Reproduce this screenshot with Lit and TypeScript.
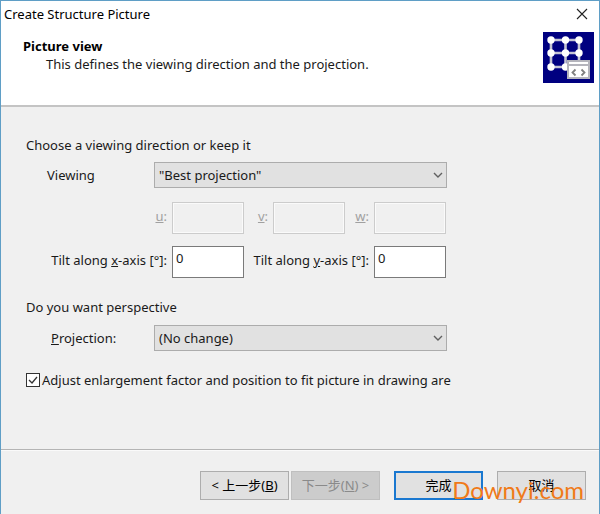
import { LitElement, html, css, svg } from "lit";
import { customElement, property } from "lit/decorators.js";

const chevron = html`<svg class="chevron" width="10" height="6" viewBox="0 0 10 6" aria-hidden="true">
  <path d="M1 1l4 4 4-4" fill="none" stroke="#606060" stroke-width="1.4" />
</svg>`;

@customElement("lattice-logo")
export class LatticeLogo extends LitElement {
  static styles = css`
    :host { display: block; width: 51px; height: 51px; }
    svg { display: block; }
  `;

  render() {
    const stops = [8, 22.5, 36];
    const rows = [8, 21, 35];
    return html`<svg width="51" height="51" viewBox="0 0 51 51" aria-hidden="true">
      <rect width="51" height="51" fill="#000080" />
      <path d="M8 8H36M8 21H36M8 35H36M8 8V35M22.5 8V35M36 8V35" stroke="#c4c4d4" stroke-width="2.6" fill="none" />
      ${rows.map((y) => stops.map((x) => svg`<circle cx=${x} cy=${y} r="3.7" fill="#fff" />`))}
      <rect x="24" y="28" width="23" height="19" fill="#b4b4bc" />
      <rect x="26" y="30" width="19" height="2" fill="#fff" />
      <rect x="26" y="34" width="19" height="11" fill="#fff" />
      <path d="M32.500 37.500l-3 3 3 3M38.500 37.500l3 3-3 3" fill="none" stroke="#808080" stroke-width="1.800" />
    </svg>`;
  }
}

@customElement("app-root")
export class AppRoot extends LitElement {
  @property() heading = "Create Structure Picture";

  static styles = css`
    :host {
      display: block;
      font: 13px/18px "Noto Sans", "Noto Sans CJK SC", sans-serif;
      color: #1a1a1a;
    }
    * { box-sizing: border-box; }
    .window {
      position: relative;
      display: flex;
      flex-direction: column;
      min-height: 100vh;
      border: 1px solid #5f9ec6;
      border-bottom: 0;
      background: #f0f0f0;
    }
    .titlebar {
      display: flex;
      justify-content: space-between;
      align-items: center;
      height: 26px;
      padding: 0 11px 0 3px;
      background: #fff;
      color: #000;
    }
    .close { border: 0; padding: 0; background: none; display: flex; }
    .header {
      display: flex;
      justify-content: space-between;
      height: 80px;
      padding: 5px 5px 0 22px;
      background: #fff;
      border-bottom: 2px solid #c4c4c4;
    }
    h1, h2, p { margin: 0; font-size: inherit; }
    h1 { margin-top: 5px; color: #000; }
    h2 { font-weight: 400; }
    .header p { padding-left: 23px; }
    .body {
      flex: 1;
      padding: 29px 25px 0;
      border-bottom: 1px solid #b4b4b4;
    }
    .field {
      display: grid;
      grid-template-columns: 107px 293px;
      align-items: center;
      margin: 8px 0 14px;
      padding-left: 21px;
    }
    .field.projection { margin: 9px 0 0; padding-left: 25px; grid-template-columns: 103px 293px; }
    .picker { position: relative; }
    select {
      display: block;
      appearance: none;
      width: 100%;
      height: 26px;
      padding: 0 4px;
      border: 1px solid #acacac;
      border-radius: 0;
      background: #e1e1e1;
      color: inherit;
      font: inherit;
    }
    .chevron { position: absolute; right: 4px; top: 10px; pointer-events: none; }
    .axes {
      display: grid;
      grid-template-columns: 116px 72px 19px 72px 19px 72px;
      gap: 12px 5px;
      align-items: center;
      padding-left: 25px;
    }
    .axes label { padding-bottom: 5px; text-align: right; white-space: nowrap; }
    .axes .wide { grid-column: span 3; }
    .axes .off { color: #a0a0a0; }
    .axes input {
      width: 100%;
      height: 32px;
      padding: 0 3px 8px;
      border: 1px solid #7a7a7a;
      background: #fff;
      color: inherit;
      font: inherit;
    }
    .axes input:disabled {
      border-color: #ccc;
      background: #f0f0f0;
      box-shadow: inset 0 0 0 1px #fafafa;
    }
    .perspective { margin-top: 20px; }
    .check { display: flex; align-items: center; gap: 2px; margin-top: 20px; }
    .check input {
      display: block;
      appearance: none;
      width: 14px;
      height: 14px;
      margin: 0;
      border: 1px solid #333;
      background: #fff;
    }
    .box { position: relative; display: flex; }
    .tick { position: absolute; left: 2px; top: 2px; pointer-events: none; }
    .footer {
      display: flex;
      justify-content: flex-end;
      gap: 14px;
      padding: 20px 13px 14px;
      border-top: 1px solid #fafafa;
    }
    .pair { display: flex; gap: 2px; }
    .btn {
      width: 89px;
      height: 29px;
      padding: 0 0 2px;
      border: 1px solid #adadad;
      background: #e1e1e1;
      color: #000;
      font: inherit;
    }
    .btn:disabled { background: #ccc; border-color: #bfbfbf; color: #8a8a8a; }
    .btn.default { border: 2px solid #1a78d0; }
    .watermark {
      position: absolute;
      right: 15px;
      bottom: 8px;
      color: #f07a18;
      font: 24px/32px Lato, sans-serif;
      pointer-events: none;
    }
  `;

  render() {
    return html`<main class="window">
      <div class="titlebar">
        <span>${this.heading}</span>
        <button class="close" aria-label="Close">
          <svg width="12" height="12" viewBox="0 0 12 12"><path d="M1 1l10 10M11 1L1 11" stroke="#222" stroke-width="1.100" /></svg>
        </button>
      </div>
      <header class="header">
        <div>
          <h1>Picture view</h1>
          <p>This defines the viewing direction and the projection.</p>
        </div>
        <lattice-logo></lattice-logo>
      </header>
      <form class="body" @submit=${(e: Event) => e.preventDefault()}>
        <h2>Choose a viewing direction or keep it</h2>
        <div class="field">
          <label for="viewing">Viewing</label>
          <div class="picker"><select id="viewing"><option>"Best projection"</option></select>${chevron}</div>
        </div>
        <div class="axes">
          ${["u", "v", "w"].map((k) => html`<label class="off" for=${k}><u>${k}</u>:</label><input id=${k} disabled />`)}
          <label for="tx">Tilt along <u>x</u>-axis [°]:</label><input id="tx" value="0" />
          <label class="wide" for="ty">Tilt along <u>y</u>-axis [°]:</label><input id="ty" value="0" />
        </div>
        <h2 class="perspective">Do you want perspective</h2>
        <div class="field projection">
          <label for="projection"><u>P</u>rojection:</label>
          <div class="picker"><select id="projection"><option>(No change)</option></select>${chevron}</div>
        </div>
        <div class="check">
          <span class="box">
            <input type="checkbox" id="fit" checked />
            <svg class="tick" width="10" height="10" viewBox="0 0 10 10"><path d="M1 5l3 3 5-6" fill="none" stroke="#333" stroke-width="1.300" /></svg>
          </span>
          <label for="fit">Adjust enlargement factor and position to fit picture in drawing are</label>
        </div>
      </form>
      <footer class="footer">
        <div class="pair">
          <button class="btn">&lt; 上一步(<u>B</u>)</button>
          <button class="btn" disabled>下一步(<u>N</u>) &gt;</button>
        </div>
        <button class="btn default">完成</button>
        <button class="btn">取消</button>
      </footer>
      <div class="watermark">Downyi.com</div>
    </main>`;
  }
}
